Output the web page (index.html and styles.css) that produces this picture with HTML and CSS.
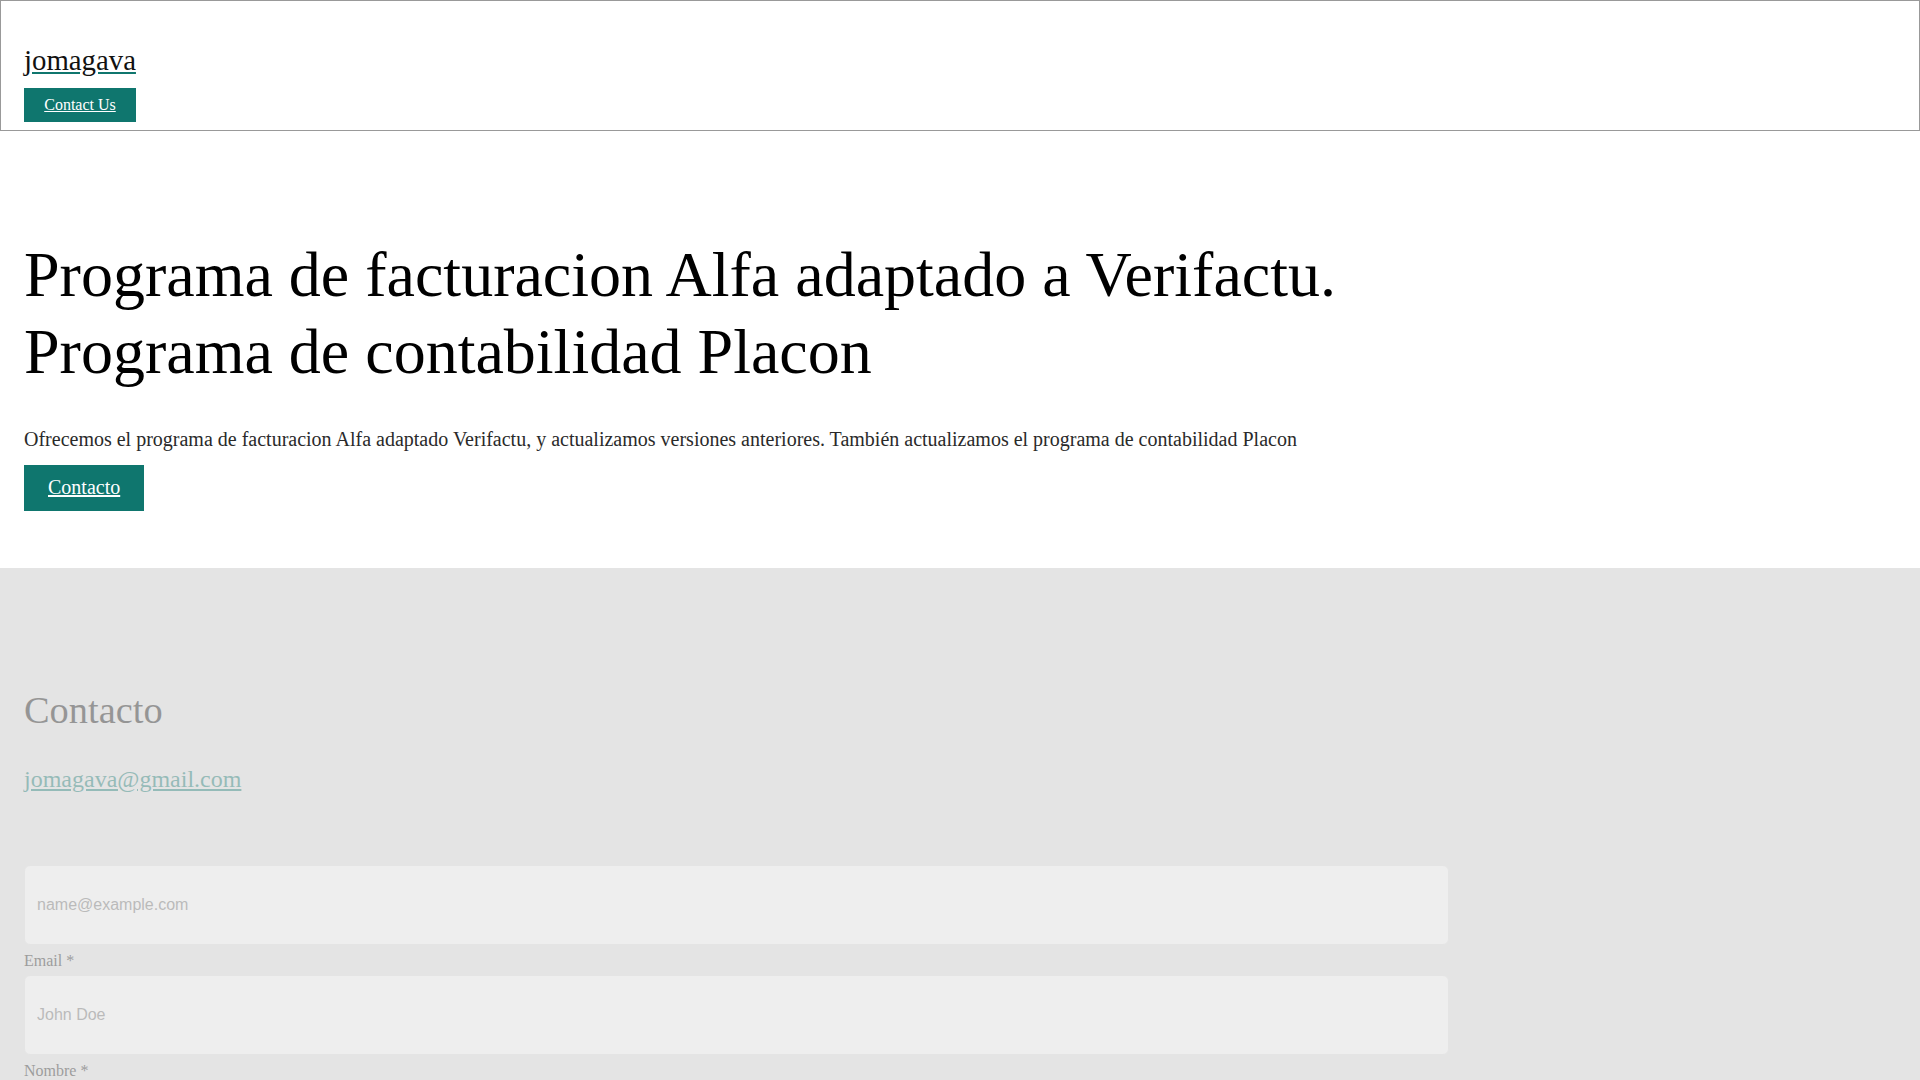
FILE: index.html
```html
<!DOCTYPE html>
<html lang="es">
<head>
<meta charset="utf-8">
<title>jomagava</title>
<link rel="stylesheet" href="styles.css">
</head>
<body>
<header class="site-header">
  <div class="brand-stack">
    <a class="brand" href="#">jomagava</a>
    <a class="btn btn-sm" href="#contacto">Contact Us</a>
  </div>
</header>
<main>
  <section class="hero">
    <div class="container">
      <h1 class="hero-title">Programa de facturacion Alfa adaptado a Verifactu. Programa de contabilidad Placon</h1>
      <p class="hero-text">Ofrecemos el programa de facturacion Alfa adaptado Verifactu, y actualizamos versiones anteriores. También actualizamos el programa de contabilidad Placon</p>
      <a class="btn btn-lg" href="#contacto">Contacto</a>
    </div>
  </section>
  <section class="contact" id="contacto">
    <div class="container fade">
      <h2 class="contact-title">Contacto</h2>
      <p class="email-line"><a class="email" href="#">jomagava@gmail.com</a></p>
      <form class="contact-form">
        <div class="field">
          <input class="field-input" type="email" id="email" placeholder="name@example.com">
          <label class="field-label" for="email">Email *</label>
        </div>
        <div class="field">
          <input class="field-input" type="text" id="nombre" placeholder="John Doe">
          <label class="field-label" for="nombre">Nombre *</label>
        </div>
        <div class="field">
          <input class="field-input" type="tel" id="telefono" placeholder="600 000 000">
          <label class="field-label" for="telefono">Teléfono</label>
        </div>
        <div class="field">
          <textarea class="field-input field-area" id="mensaje" placeholder="Mensaje"></textarea>
          <label class="field-label" for="mensaje">Mensaje *</label>
        </div>
        <button class="btn btn-lg btn-submit" type="button">Enviar</button>
      </form>
    </div>
  </section>
</main>
<footer class="site-footer">
  <p class="footer-text">© 2025 jomagava</p>
</footer>
</body>
</html>
```

FILE: styles.css
```css
html {
  overflow-y: scroll;
}

html, body {
  margin: 0;
  padding: 0;
}

body {
  font-family: "Liberation Serif", "Times New Roman", serif;
  color: #111;
  background: #fff;
}

.site-header {
  border: 1px solid #999;
  padding: 42px 23px 8px;
}

.brand-stack {
  display: flex;
  flex-direction: column;
  align-items: flex-start;
  gap: 11px;
}

.brand {
  display: block;
  font-size: 28.8px;
  line-height: 34px;
  color: #111;
  text-decoration: underline;
  text-decoration-color: #0f766e;
  text-underline-offset: 2px;
}

.btn {
  display: inline-block;
  background: #0f766e;
  color: #fff;
  text-decoration: underline;
  text-align: center;
  border: none;
  font-family: "Liberation Serif", "Times New Roman", serif;
}

.btn-sm {
  display: block;
  width: 72px;
  font-size: 16px;
  line-height: 18px;
  padding: 8px 20px;
}

.btn-lg {
  font-size: 20px;
  line-height: 23px;
  padding: 11.5px 24px;
}

.container {
  padding: 0 24px;
  max-width: 1425px;
}

.hero {
  padding: 106px 0 57px;
}

.hero-title {
  margin: 0;
  font-size: 64px;
  line-height: 76.8px;
  font-weight: normal;
  color: #000;
}

.hero-text {
  margin: 37px 0 14px;
  font-size: 20px;
  line-height: 23px;
  color: #2a2a2a;
}

.contact {
  background: #e4e4e4;
  padding: 120px 0 120px;
}

.fade {
  opacity: 0.37;
}

.contact-title {
  margin: 0;
  font-size: 38.4px;
  line-height: 44px;
  font-weight: normal;
  color: #111;
}

.email-line {
  margin: 33px 0 0;
  font-size: 24px;
  line-height: 28px;
}

.email {
  color: #0f766e;
}

.contact-form {
  margin-top: 72px;
}

.field {
  display: flex;
  flex-direction: column;
}

.field-input {
  box-sizing: border-box;
  height: 80px;
  width: 100%;
  padding: 0 12px;
  border: 1px solid #e6e6e6;
  border-radius: 6px;
  background: #fff;
  font-family: "Liberation Sans", Arial, sans-serif;
  font-size: 16px;
  color: #111;
}

.field-input::placeholder {
  color: #757575;
}

.field-area {
  height: 160px;
  padding-top: 14px;
  resize: none;
}

.field-label {
  font-size: 16px;
  line-height: 24px;
  padding-top: 4px;
  margin-bottom: 2px;
  color: #222;
}

.btn-submit {
  margin-top: 16px;
}

.site-footer {
  padding: 60px 24px;
  border-top: 1px solid #ddd;
}

.footer-text {
  margin: 0;
  font-size: 16px;
  color: #555;
}
```
